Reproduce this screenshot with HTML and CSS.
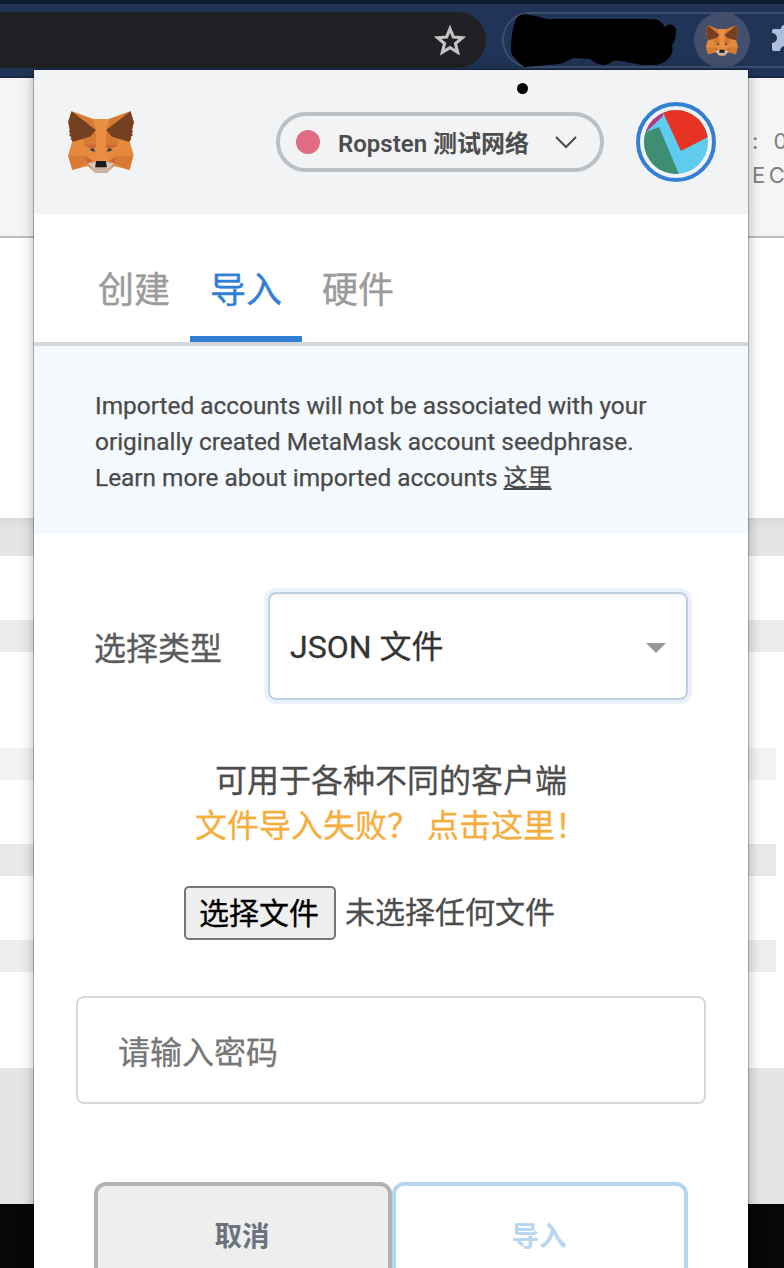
FILE: index.html
```html
<!DOCTYPE html>
<html lang="zh-CN">
<head>
<meta charset="utf-8">
<title>MetaMask</title>
<link rel="stylesheet" href="styles.css">
</head>
<body>
<svg class="defs" aria-hidden="true">
  <symbol id="fox" viewBox="54 48 197 186">
    <path fill="#e58a3c" d="M64 49 128 72H177L241 49 251 80 246 108 239 140 249 183 238 225 192 213 171 233H135L113 213 67 225 54 183 66 140 58 108 54 80Z"/>
    <path fill="#d67a36" d="M64 49 128 72 137 105ZM241 49 177 72 168 105ZM137 105 120 126 98 133 104 150 139 156ZM168 105 185 126 207 133 201 150 166 156ZM54 183H105L113 205 67 225ZM249 183H200L192 205 238 225Z"/>
    <path fill="#e58a3c" d="M66 140 98 133 104 150 105 183H54ZM239 140 207 133 201 150 200 183H251Z"/>
    <path fill="#c96a32" d="M98 149 140 149 135 158 119 160ZM207 149 165 149 170 158 186 160ZM105 183 129 197 113 207ZM200 183 176 197 192 207Z"/>
    <path fill="#e88f43" d="M128 72H177L168 105 166 162 171 200H134L139 162 137 105Z"/>
    <path fill="#754021" d="M64 49 137 105 120 125 69 140 61 131 64 127 57 121 60 115 56 109 60 106 54 82ZM241 49 168 105 185 125 236 140 244 131 241 127 248 121 245 115 249 109 245 106 251 82Z"/>
    <path fill="#30404f" d="M118 164 129 158 136 171 125 168ZM187 164 176 158 169 171 180 168Z"/>
    <path fill="#c9b5a6" d="M113 205 135 200H170L192 205 171 233H135Z"/>
    <path fill="#d9cbbf" d="M113 205 134 205 135 220ZM192 205 171 205 170 220Z"/>
    <path fill="#181a1b" d="M138 198H167L170 217H135Z"/>
  </symbol>
</svg>
<div class="screen">
  <div class="browser">
    <div class="omnibox">
      <svg class="star" viewBox="0 0 30 29"><path d="M15 4 18 11.4 26 12 19.9 17.2 21.8 25 15 20.8 8.2 25 10.100 17.200 4 12 12 11.400Z"/></svg>
    </div>
    <div class="extensions">
      <svg class="scribble" viewBox="0 0 168 56"><path d="M5 9C7 2 12 0 20 2 30 3 34 7 44 6H142C149 6 152 9 155 14 160 9 165 12 166 17 166 24 165 28 162 32 165 44 154 53 140 52 127 53 114 46 103 48 96 54 88 53 80 46L64 45C56 47 57 50 48 51L16 54C12 54 9 49 2 42 0 36 1 20 5 9Z"/></svg>
      <div class="ext-button"><svg class="ext-fox"><use href="#fox"/></svg></div>
      <svg class="puzzle" viewBox="0 0 30 30"><path d="M2 6H9A4 4 0 0 1 17 6H25V28H18A5 5 0 0 0 8 28H2Q0 28 0 26V20A4.500 4.500 0 0 0 0 10V8Q0 6 2 6Z"/></svg>
    </div>
  </div>
  <div class="page-head"><p>: 0</p><p>EC</p></div>
  <div class="page-body">
    <div class="stripe first"></div>
    <div class="stripe second"></div>
    <div class="stripe third"></div>
    <div class="stripe fourth"></div>
    <div class="stripe fifth"></div>
  </div>
  <div class="page-foot"></div>
  <div class="page-end"></div>

  <main class="popup">
    <header class="app-header">
      <svg class="logo"><use href="#fox"/></svg>
      <div class="network">
        <span class="dot"></span>
        <span class="network-name">Ropsten 测试网络</span>
        <svg class="chevron" viewBox="0 0 22 13"><path d="M1 1 11 11 21 1"/></svg>
      </div>
      <div class="account">
        <svg viewBox="0 0 64 64"><clipPath id="round"><circle cx="32" cy="32" r="32"/></clipPath><g clip-path="url(#round)"><path fill="#5fcbee" d="M0 0H64V64H0Z"/><path fill="#e63323" d="M15-6H70V24L37 41Z"/><path fill="#b7367b" d="M0 24 19 6V0H0Z"/><path fill="#3f8d72" d="M0 23 15 17 37 69H0Z"/></g></svg>
      </div>
      <i class="ink-spot"></i>
    </header>
    <nav class="tabs">
      <span class="tab">创建</span><span class="tab active">导入</span><span class="tab">硬件</span>
    </nav>
    <section class="notice">Imported accounts will not be associated with your<br>originally created MetaMask account seedphrase.<br>Learn more about imported accounts <u>这里</u></section>
    <section class="form">
      <div class="type-row">
        <span class="type-label">选择类型</span>
        <div class="select"><span>JSON 文件</span><i class="caret"></i></div>
      </div>
      <div class="help"><p>可用于各种不同的客户端</p><p class="warning">文件导入失败？ 点击这里！</p></div>
      <div class="file-row"><span class="file-button">选择文件</span><span>未选择任何文件</span></div>
      <div class="password">请输入密码</div>
      <div class="actions"><div class="button cancel">取消</div><div class="button import">导入</div></div>
    </section>
  </main>
</div>
</body>
</html>
```
FILE: styles.css
```css
* { box-sizing: border-box; }
body { margin: 0; font-family: Roboto, "Noto Sans CJK SC", sans-serif; }
p { margin: 0; }
.defs { position: absolute; width: 0; height: 0; }
.screen { position: relative; width: 784px; height: 1268px; overflow: hidden; background: #fff; display: flex; flex-direction: column; }

.browser { flex: none; height: 78px; border-top: 4px solid #0b1b30; border-bottom: 2px solid #182844; background: #203457; display: flex; padding-top: 8px; gap: 16px; }
.omnibox { flex: none; width: 486px; height: 56px; background: #202124; border-radius: 0 28px 28px 0; display: flex; justify-content: flex-end; align-items: center; padding-right: 21px; }
.star { width: 30px; height: 29px; fill: none; stroke: #c3c3c4; stroke-width: 2.8; overflow: visible; transform: scale(1.12); }
.extensions { flex: none; width: 360px; height: 56px; border: 2px solid #3d4e6f; border-radius: 28px; display: flex; align-items: center; padding-left: 6px; }
.scribble { flex: none; width: 168px; height: 56px; margin-top: 2px; }
.ext-button { flex: none; width: 56px; height: 56px; margin-left: 16px; border-radius: 50%; background: #42506d; display: flex; align-items: center; justify-content: center; }
.ext-fox { width: 32px; height: 31px; }
.puzzle { flex: none; width: 30px; height: 30px; margin-left: 22px; margin-top: -4px; fill: #adbfdc; }

.page-head { flex: none; height: 160px; background: #f5f5f5; border-bottom: 2px solid #bdbdbd; padding: 46px 0 0 752px; color: #808080; font: 22px/34px Inter, sans-serif; letter-spacing: 3.5px; white-space: nowrap; }
.page-head p:first-child { word-spacing: 2px; }
.page-body { flex: none; height: 830px; padding-top: 280px; }
.stripe { height: 32px; width: 776px; }
.first { width: 784px; height: 38px; background: linear-gradient(#dadada, #e5e5e5 12px); }
.second { width: 784px; margin-top: 64px; background: #ebebeb; }
.third { margin-top: 96px; background: #f2f2f2; }
.fourth { margin-top: 64px; background: #e9e9e9; }
.fifth { margin-top: 64px; background: #ededed; }
.page-foot { flex: none; height: 136px; background: #e5e5e5; }
.page-end { flex: 1; background: #080705; }

.popup { position: absolute; left: 34px; top: 70px; width: 714px; height: 1240px; background: #fff; box-shadow: 0 0 0 1px rgba(0,0,0,.22), 0 2px 12px rgba(0,0,0,.32); }
.app-header { position: relative; height: 144px; background: #f2f3f4; display: flex; align-items: center; padding: 0 32px 0 34px; }
.logo { width: 66px; height: 62px; }
.network { width: 328px; height: 60px; margin-left: 142px; border: 4px solid #bbc0c5; border-radius: 30px; display: flex; align-items: center; padding-left: 16px; }
.dot { width: 24px; height: 24px; border-radius: 50%; background: #e06c83; }
.network-name { width: 192px; margin: 4px 25px 0 18px; font-size: 24px; line-height: 30px; font-weight: 600; color: #4d4d4d; white-space: nowrap; }
.chevron { width: 22px; height: 13px; fill: none; stroke: #4a4d50; stroke-width: 2; }
.account { width: 80px; height: 80px; margin-left: 33px; border: 4px solid #3280d3; border-radius: 50%; padding: 4px; margin-left: auto; }
.account svg { display: block; width: 64px; height: 64px; }
.ink-spot { position: absolute; left: 483px; top: 13px; width: 11px; height: 11px; border-radius: 50%; background: #000; }

.tabs { height: 132px; border-bottom: 4px solid #d2d8dd; display: flex; padding-left: 44px; }
.tab { width: 112px; height: 128px; text-align: center; font-size: 36px; line-height: 155px; color: #9b9b9b; -webkit-text-stroke: .4px; }
.active { color: #317fd4; border-bottom: 6px solid #317fd4; }

.notice { height: 188px; background: #f4f9fd; padding: 42px 0 0 61px; font-size: 24.4px; line-height: 36px; color: #4a4a4a; white-space: nowrap; -webkit-text-stroke: .25px; }
.notice u { font-size: 24px; }
.form { padding-top: 58px; color: #4d4d4d; -webkit-text-stroke: .3px; }
.type-row { display: flex; align-items: center; padding-left: 60px; }
.type-label { width: 174px; font-size: 32px; color: #5b5b5b; }
.select { width: 420px; height: 108px; border: 2px solid #c1cfe3; border-radius: 8px; box-shadow: 0 0 0 4px #ebf2fe, inset 0 2px 3px rgba(0,0,0,.06); display: flex; align-items: center; justify-content: space-between; padding: 0 20px; font-size: 32px; color: #333; }
.select span { margin-bottom: 4px; }
.caret { border: 10px solid transparent; border-top-color: #999; border-bottom: 0; margin-top: 3px; }
.help { margin-top: 59px; text-align: center; font-size: 32px; line-height: 45px; white-space: pre; }
.warning { color: #f5ae3c; }
.file-row { display: flex; align-items: center; gap: 9px; margin-top: 37px; padding-left: 150px; font-size: 30px; line-height: 52px; }
.file-row span { height: 54px; padding-top: 1px; margin-right: 0; }
.file-row .file-button { width: 152px; padding: 0 2px 0 0; border: 2px solid #767676; border-radius: 5px; background: #efefef; color: #000; text-align: center; }
.password { width: 630px; height: 108px; margin: 56px 0 0 42px; border: 2px solid #d4d9dc; border-radius: 8px; padding-left: 40px; font-size: 32px; line-height: 110px; color: #777; }
.actions { display: flex; margin: 78px 0 0 60px; }
.button { width: 298px; height: 112px; border: 4px solid #b2b2b2; border-radius: 12px; background: #eee; color: #6a737d; font-size: 27.5px; font-weight: 600; line-height: 101px; text-align: center; padding-right: 2px; -webkit-text-stroke: 0; }
.import { width: 296px; border-color: #b7d6f0; background: #fff; color: #b7d6f0; }
```
